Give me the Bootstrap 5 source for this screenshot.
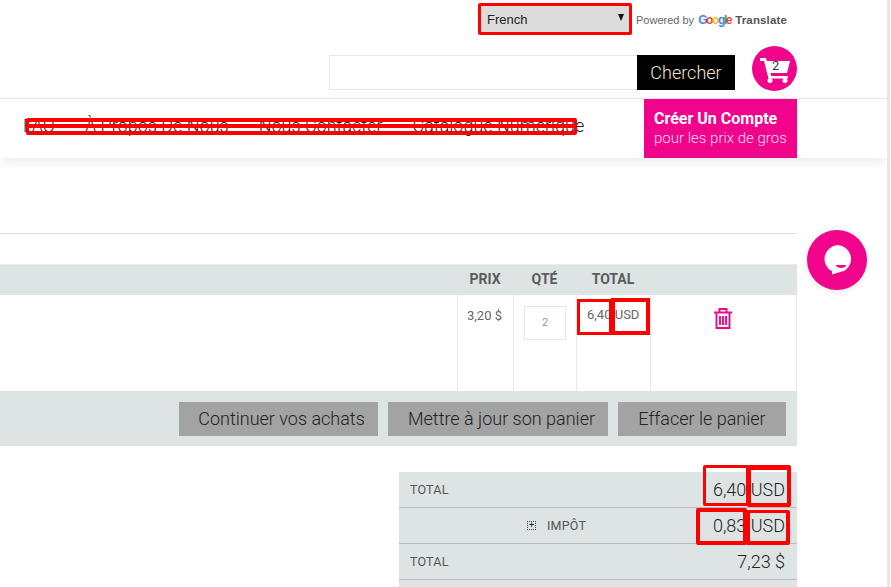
<!DOCTYPE html>
<html lang="fr">
<head>
<meta charset="utf-8">
<title>Panier</title>
<link href="https://cdn.jsdelivr.net/npm/bootstrap@5.3.0/dist/css/bootstrap.min.css" rel="stylesheet">
<style>
html,body{height:587px;overflow:hidden;background:#fff}
body{font-family:Roboto,"Liberation Sans",sans-serif;color:#555;position:relative}
.sb-edge{position:absolute;top:0;left:887px;bottom:0;width:3px;background:#e8e8e8}
.pg{width:797px}
.lang-row{height:46px;padding-left:478px;padding-top:3px}
.lang-box{width:154px;height:32px;border:3px solid #f00;border-radius:2px;background:#dcdcdc;font:13px "Liberation Sans",sans-serif;color:#222;padding:0 6px 0 6px;line-height:28px;position:relative}
.lang-caret{position:absolute;right:5px;top:8px;width:0;height:0;border-left:3.5px solid transparent;border-right:3.5px solid transparent;border-top:7px solid #111}
.powered{font:11px "Liberation Sans",sans-serif;color:#666;padding-left:4px;padding-top:10px;white-space:nowrap}
.powered b{color:#555;font-size:11.5px;letter-spacing:.15px}
.goog{font-size:12px;font-weight:700;letter-spacing:-1.4px;margin:0 1px}
.g-b{color:#4285f4}.g-r{color:#ea4335}.g-y{color:#fbbc05}.g-g{color:#34a853}
.search-row{padding-left:329px;height:52px}
.search-in{width:308px;height:35px;margin-top:9px;border:1px solid #e6e6e6;border-right:0}
.search-btn{width:98px;height:35px;margin-top:9px;background:#000;color:#f4e4d0;font-size:18px;font-weight:300;line-height:35px;text-align:center}
.cart-btn{width:45px;height:45px;border-radius:50%;background:#f0048c;margin-left:17px;position:relative}
.cart-btn svg{position:absolute;left:8px;top:12px}
.cart-num{position:absolute;left:20px;top:13px;font-size:13px;line-height:14px;color:#334}
.nav-wrap{border-top:1px solid #e6e6e6;height:60px;width:887px;box-shadow:0 4px 10px rgba(0,0,0,.08);background:#fff}
.nav-bar{width:797px;height:59px}
.nav-links{padding-left:23px;font-size:18px;font-weight:300;color:#222;gap:30px;position:relative;line-height:21px;padding-top:16px;white-space:nowrap}
.red-strike{position:absolute;left:26px;top:19px;width:551px;height:17px;border:solid #f00;border-width:4px 3px 4px;border-radius:2px;background:linear-gradient(#f00,#f00) 0 2px/100% 4px no-repeat}
.signup{width:153px;height:59px;background:#f0048c;color:#fff;padding:10px 0 0 10px;line-height:20px}
.signup b{font-size:16px;font-weight:700;display:block}
.signup span{font-size:15px;font-weight:300;display:block;color:#fde;margin-top:-1px}
.rule{height:76px;border-bottom:1px solid #e0e0e0}
.cart-head{margin-top:30px;height:31px;background:#dee3e3;border-top:1px solid #e8ecec;font-weight:700;font-size:14px;line-height:29px;color:#5c5c5c;text-align:center}
.cart-head>div{padding-right:2px}
.c-main{width:458px}.c-prix{width:56px}.c-qte{width:63px}.c-tot{width:74px}.c-del{width:146px}
.cart-line{height:96px;font-size:13px;color:#666}
.cart-line>div{border-right:1px solid #e8e8e8;height:96px;text-align:center;padding:11px 2px 0 0;position:relative}
.cart-line>.c-qte{padding-right:0}
.qty-box{width:42px;height:34px;border:1px solid #e6e6e6;margin:0 auto;font-size:11px;line-height:32px;color:#8b93b8}
.red-a,.red-b{position:absolute;border:solid #f00}
.red-a{left:0;top:4px;width:35px;height:36px;border-width:3px}
.red-b{left:34px;top:3px;width:39px;height:37px;border-width:4px}
.cell-val{position:absolute;left:10px;top:12px;line-height:16px;white-space:nowrap}
.trash{display:block;margin:2px auto 0}
.act-bar{height:55px;background:#dee3e3;padding:11px 11px 0 0;gap:10px;justify-content:flex-end}
.act-btn{height:34px;background:#a3a3a3;color:#222;font-size:18px;font-weight:300;line-height:34px;text-align:center}
.act-1{width:199px;padding-left:6px}.act-2{width:220px;padding-left:7px}.act-3{width:168px}
.sum-box{margin:26px 0 0 399px;width:398px;background:#dee3e3;height:115px}
.sum-r{height:36px;border-bottom:1px solid #bbb;padding:0 12px 0 11px;position:relative;align-items:center;justify-content:space-between}
.sum-l{font-size:12.5px;color:#555;letter-spacing:.2px;padding-top:2px}
.sum-v{font-size:18px;font-weight:300;color:#222;white-space:nowrap}
.sum-i{position:absolute;left:128px;top:13px;width:9px;height:9px;border:1px dotted #444;font-size:9px;line-height:7px;text-align:center;color:#222}
.sum-t{position:absolute;left:148px;top:7px}
.red-c{position:absolute;border:3px solid #f00;border-radius:2px}
.rc-1{left:304px;top:-7px;width:46px;height:41px}
.rc-2{left:348px;top:-7px;width:44px;height:42px;border-width:5px 4px 4px}
.rc-3{left:297px;top:0;width:51px;height:37px;border-width:4px}
.rc-4{left:347px;top:2px;width:44px;height:35px;border-width:3px 4px 4px}
.chat-btn{position:absolute;left:807px;top:230px;width:60px;height:60px;border-radius:50%;background:#f0048c;box-shadow:0 1px 6px rgba(0,0,0,.12)}
.chat-btn svg{position:absolute;left:15px;top:15px}
</style>
</head>
<body>
<div class="sb-edge"></div>
<div class="pg">
  <div class="lang-row d-flex">
    <div class="lang-box">French<span class="lang-caret"></span></div>
    <div class="powered">Powered by <span class="goog"><span class="g-b">G</span><span class="g-r">o</span><span class="g-y">o</span><span class="g-b">g</span><span class="g-g">l</span><span class="g-r">e</span></span> <b>Translate</b></div>
  </div>
  <div class="search-row d-flex">
    <div class="search-in"></div>
    <div class="search-btn">Chercher</div>
    <div class="cart-btn">
      <svg width="30" height="25" viewBox="0 0 30 25"><path d="M0 0h6l1 3h23l-3 12H10.500l.7 3H28v2.500H8.500L4 3H0z" fill="#fff"/><circle cx="10" cy="22.500" r="2.500" fill="#fff"/><circle cx="25" cy="22.500" r="2.500" fill="#fff"/></svg>
      <span class="cart-num">2</span>
    </div>
  </div>
</div>
<div class="nav-wrap">
  <div class="nav-bar d-flex justify-content-between">
    <div class="nav-links d-flex">
      <span>FAQ</span><span>À Propos De Nous</span><span>Nous Contacter</span><span>Catalogue Numérique</span>
      <div class="red-strike"></div>
    </div>
    <div class="signup"><b>Créer Un Compte</b><span>pour les prix de gros</span></div>
  </div>
</div>
<div class="pg">
  <div class="rule"></div>
  <div class="cart-head d-flex">
    <div class="c-main"></div><div class="c-prix">PRIX</div><div class="c-qte">QTÉ</div><div class="c-tot">TOTAL</div><div class="c-del"></div>
  </div>
  <div class="cart-line d-flex">
    <div class="c-main"></div>
    <div class="c-prix">3,20 $</div>
    <div class="c-qte"><div class="qty-box">2</div></div>
    <div class="c-tot"><span class="cell-val">6,40 USD</span><span class="red-a"></span><span class="red-b"></span></div>
    <div class="c-del">
      <svg class="trash" width="18" height="21" viewBox="0 0 18 21" fill="none" stroke="#f0048c" stroke-width="1.900"><path d="M0 4.500h18M5.500 4V1h7v3M2.500 5v15h13V5M6 8v9M9 8v9M12 8v9"/></svg>
    </div>
  </div>
  <div class="act-bar d-flex">
    <div class="act-btn act-1">Continuer vos achats</div>
    <div class="act-btn act-2">Mettre à jour son panier</div>
    <div class="act-btn act-3">Effacer le panier</div>
  </div>
  <div class="sum-box">
    <div class="sum-r d-flex"><span class="sum-l">TOTAL</span><span class="sum-v">6,40 USD</span>
      <i class="red-c rc-1"></i><i class="red-c rc-2"></i></div>
    <div class="sum-r d-flex"><span class="sum-i">+</span><span class="sum-l sum-t">IMPÔT</span><span></span><span class="sum-v">0,83 USD</span>
      <i class="red-c rc-3"></i><i class="red-c rc-4"></i></div>
    <div class="sum-r d-flex"><span class="sum-l">TOTAL</span><span class="sum-v">7,23 $</span></div>
  </div>
</div>
<div class="chat-btn">
  <svg width="30" height="32" viewBox="0 0 30 32"><path d="M15 0a14 14 0 0 1 8 25.500L10 29.500v-3.200A14 14 0 0 1 15 0z" fill="#fff"/><path d="M14 20h10a5 3 0 0 1-10 0z" fill="#f0048c"/></svg>
</div>
</body>
</html>
